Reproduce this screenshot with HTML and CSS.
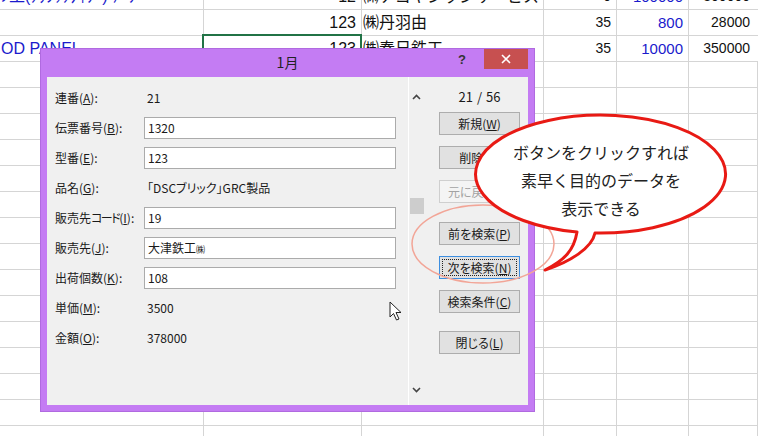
FILE: index.html
```html
<!DOCTYPE html>
<html lang="ja">
<head>
<meta charset="utf-8">
<title>1月</title>
<link rel="stylesheet" href="styles.css">
</head>
<body>
<div class="sheet">
  <div class="row">
    <div class="c blue big left">ﾝ工(ｸﾗｼｯｸﾀｲﾌﾟ) ﾃｰﾌﾟ</div>
    <div class="c num big">12</div>
    <div class="c big left">㈱ナゴヤシッシサービス</div>
    <div class="c num">0</div>
    <div class="c num blue big">100000</div>
    <div class="c num wide">300000</div>
  </div>
  <div class="row">
    <div class="c"></div>
    <div class="c num big">123</div>
    <div class="c big left">㈱丹羽由</div>
    <div class="c num">35</div>
    <div class="c num blue big">800</div>
    <div class="c num wide">28000</div>
  </div>
  <div class="row">
    <div class="c blue big left">OD PANEL</div>
    <div class="c num big sel">123</div>
    <div class="c big left">㈱春日鉄工</div>
    <div class="c num">35</div>
    <div class="c num blue big">10000</div>
    <div class="c num wide">350000</div>
  </div>
  <div class="row"><i class="c"></i><i class="c"></i><i class="c"></i><i class="c"></i><i class="c"></i><i class="c"></i></div>
  <div class="row"><i class="c"></i><i class="c"></i><i class="c"></i><i class="c"></i><i class="c"></i><i class="c"></i></div>
  <div class="row"><i class="c"></i><i class="c"></i><i class="c"></i><i class="c"></i><i class="c"></i><i class="c"></i></div>
  <div class="row"><i class="c"></i><i class="c"></i><i class="c"></i><i class="c"></i><i class="c"></i><i class="c"></i></div>
  <div class="row"><i class="c"></i><i class="c"></i><i class="c"></i><i class="c"></i><i class="c"></i><i class="c"></i></div>
  <div class="row"><i class="c"></i><i class="c"></i><i class="c"></i><i class="c"></i><i class="c"></i><i class="c"></i></div>
  <div class="row"><i class="c"></i><i class="c"></i><i class="c"></i><i class="c"></i><i class="c"></i><i class="c"></i></div>
  <div class="row"><i class="c"></i><i class="c"></i><i class="c"></i><i class="c"></i><i class="c"></i><i class="c"></i></div>
  <div class="row"><i class="c"></i><i class="c"></i><i class="c"></i><i class="c"></i><i class="c"></i><i class="c"></i></div>
  <div class="row"><i class="c"></i><i class="c"></i><i class="c"></i><i class="c"></i><i class="c"></i><i class="c"></i></div>
  <div class="row"><i class="c"></i><i class="c"></i><i class="c"></i><i class="c"></i><i class="c"></i><i class="c"></i></div>
  <div class="row"><i class="c"></i><i class="c"></i><i class="c"></i><i class="c"></i><i class="c"></i><i class="c"></i></div>
  <div class="row"><i class="c"></i><i class="c"></i><i class="c"></i><i class="c"></i><i class="c"></i><i class="c"></i></div>
  <div class="row"><i class="c"></i><i class="c"></i><i class="c"></i><i class="c"></i><i class="c"></i><i class="c"></i></div>
  <div class="row"><i class="c"></i><i class="c"></i><i class="c"></i><i class="c"></i><i class="c"></i><i class="c"></i></div>
</div>

<div class="dialog">
  <div class="titlebar">
    <div class="title">1月</div>
    <div class="help">?</div>
    <div class="close">
      <svg width="10" height="10" viewBox="0 0 10 10"><path d="M1 1 L9 9 M9 1 L1 9" stroke="#fff" stroke-width="1.6" fill="none"/></svg>
    </div>
  </div>
  <div class="content">
    <div class="form">
      <div class="frow"><span class="lbl">連番(<u>A</u>):</span><span class="val">21</span></div>
      <div class="frow"><span class="lbl">伝票番号(<u>B</u>):</span><span class="box">1320</span></div>
      <div class="frow"><span class="lbl">型番(<u>E</u>):</span><span class="box">123</span></div>
      <div class="frow"><span class="lbl">品名(<u>G</u>):</span><span class="val">「DSCブリック」GRC製品</span></div>
      <div class="frow"><span class="lbl">販売先<span class="narrow">コード</span>(<u>I</u>):</span><span class="box">19</span></div>
      <div class="frow"><span class="lbl">販売先(<u>J</u>):</span><span class="box">大津鉄工<span class="kabu">㈱</span></span></div>
      <div class="frow"><span class="lbl">出荷個数(<u>K</u>):</span><span class="box">108</span></div>
      <div class="frow"><span class="lbl">単価(<u>M</u>):</span><span class="val">3500</span></div>
      <div class="frow"><span class="lbl">金額(<u>O</u>):</span><span class="val">378000</span></div>
    </div>
    <div class="vscroll">
      <svg class="arr up" width="9" height="6" viewBox="0 0 9 6"><path d="M1 5 L4.5 1.5 L8 5" stroke="#444" stroke-width="1.6" fill="none"/></svg>
      <div class="thumb"></div>
      <div class="spacer"></div>
      <svg class="arr down" width="9" height="6" viewBox="0 0 9 6"><path d="M1 1 L4.5 4.5 L8 1" stroke="#444" stroke-width="1.6" fill="none"/></svg>
    </div>
    <div class="side">
      <div class="counter">21 / 56</div>
      <div class="btn b1">新規(<u>W</u>)</div>
      <div class="btn b2">削除(<u>D</u>)</div>
      <div class="btn b2 disabled">元に戻す(<u>U</u>)</div>
      <div class="btn b3">前を検索(<u>P</u>)</div>
      <div class="btn b2 focus"><span class="dots">次を検索(<u>N</u>)</span></div>
      <div class="btn b2">検索条件(<u>C</u>)</div>
      <div class="btn b3">閉じる(<u>L</u>)</div>
    </div>
  </div>
</div>

<svg class="ring" width="146" height="82" viewBox="0 0 146 82"><ellipse cx="73" cy="41" rx="71" ry="39" fill="none" stroke="#f2a597" stroke-width="1.5"/></svg>

<svg class="cursor" width="14" height="21" viewBox="0 0 14 21"><path d="M1 1 L1 16 L4.5 12.5 L7.5 19 L10 18 L7 11.5 L12 11.5 Z" fill="#fff" stroke="#222" stroke-width="1" stroke-linejoin="miter"/></svg>

<div class="callout">
  <svg class="bubble" width="270" height="170" viewBox="0 0 270 170">
    <path d="M107 122 A125 59 0 1 1 125 123 C122 138 100 152 75 160 C95 150 104 140 107 122 Z" fill="#fff" stroke="#e81a14" stroke-width="3" stroke-linejoin="round"/>
  </svg>
  <div class="ctext">ボタンをクリックすれば<br>素早く目的のデータを<br>表示できる</div>
</div>
</body>
</html>
```
FILE: styles.css
```css
html, body {
  margin: 0;
  padding: 0;
  width: 758px;
  height: 436px;
  overflow: hidden;
  background: #fff;
}

body {
  position: relative;
  font-family: "Liberation Sans", "Noto Sans CJK JP", sans-serif;
}

.sheet {
  margin-top: -16px;
}

.row {
  display: grid;
  grid-template-columns: 204px 158px 182px 73px 72px 69px;
  height: 26px;
}

.c {
  box-sizing: border-box;
  border-right: 1px solid #d5d5d5;
  border-bottom: 1px solid #d5d5d5;
  height: 26px;
  line-height: 25px;
  font-size: 14px;
  color: #111;
  white-space: nowrap;
  overflow: hidden;
  padding: 0 5px;
  font-style: normal;
}

.c.left { padding-left: 1px; }
.c.num { text-align: right; }
.c.wide { padding-right: 8px; border-right: none; }
.c.big { font-size: 16px; }
.c.blue { color: #1a1acc; }
.c.num.blue { font-size: 15px; }
.c.sel { position: relative; overflow: visible; }
.c.sel::after {
  content: "";
  position: absolute;
  left: -2px;
  top: -2px;
  right: -1px;
  bottom: -1px;
  border: 2px solid #217346;
}

/* dialog */
.dialog {
  position: absolute;
  left: 40px;
  top: 48px;
  width: 495px;
  height: 364px;
  box-sizing: border-box;
  background: #c47cf3;
  padding: 0 7px 7px 7px;
  display: flex;
  flex-direction: column;
  font-family: "Noto Sans CJK JP", "Liberation Sans", sans-serif;
  font-feature-settings: "palt";
  box-shadow: 0 0 0 1px #b06ae0 inset;
}

.titlebar {
  height: 29px;
  display: flex;
  align-items: flex-start;
}

.title {
  flex: 1;
  padding-left: 70px;
  text-align: center;
  font-size: 14px;
  line-height: 29px;
  color: #222;
}

.help {
  width: 26px;
  font-size: 13px;
  font-weight: bold;
  line-height: 22px;
  padding-top: 1px;
  color: #333;
  font-family: "Liberation Sans", sans-serif;
}

.close {
  width: 44px;
  height: 20px;
  margin-top: 1px;
  background: #c75050;
  display: flex;
  align-items: center;
  justify-content: center;
}

.content {
  flex: 1;
  background: #f0f0f0;
  display: flex;
}

.form {
  width: 361px;
  box-sizing: border-box;
  padding: 6px 0 0 8px;
}

.frow {
  height: 30px;
  display: flex;
  align-items: center;
  font-size: 12px;
  color: #1a1a1a;
}

.lbl {
  width: 89px;
  line-height: 16px;
  white-space: nowrap;
}

.narrow {
  letter-spacing: -1.5px;
}

.val {
  padding-left: 3px;
  line-height: 16px;
}

.box {
  box-sizing: border-box;
  width: 252px;
  height: 22px;
  border: 1px solid #ababab;
  background: #fff;
  padding-left: 3px;
  line-height: 20px;
}

.kabu { font-size: 9px; }

.vscroll {
  width: 16px;
  box-sizing: border-box;
  border-left: 1px solid #fff;
  display: flex;
  flex-direction: column;
  align-items: center;
}

.arr { display: block; }
.arr.up { margin-top: 17px; }
.arr.down { margin-bottom: 12px; }

.thumb {
  width: 14px;
  height: 16px;
  background: #cdcdcd;
  margin-top: 98px;
}

.spacer { flex: 1; }

.side {
  flex: 1;
  padding-left: 15px;
  display: flex;
  flex-direction: column;
  align-items: flex-start;
}

.counter {
  width: 81px;
  text-align: center;
  font-size: 13px;
  line-height: 16px;
  margin-top: 12px;
  color: #1a1a1a;
  word-spacing: 1px;
}

.btn {
  box-sizing: border-box;
  width: 81px;
  height: 23px;
  border: 1px solid #adadad;
  background: #e1e1e1;
  font-size: 12px;
  line-height: 21px;
  text-align: center;
  color: #1a1a1a;
}

.btn.b1 { margin-top: 7px; }
.btn.b2 { margin-top: 11px; }
.btn.b3 { margin-top: 19px; }
.btn.b3:last-child { margin-top: 18px; }

.btn.disabled {
  color: #a3a3a3;
  border-color: #cfcfcf;
  background: #f4f4f4;
}

.btn.focus {
  border-color: #3d8ee0;
  padding: 2px;
  line-height: 17px;
}

.dots {
  display: block;
  border: 1px dotted #222;
  height: 17px;
  box-sizing: border-box;
  line-height: 15px;
}

.ring {
  position: absolute;
  left: 410px;
  top: 203px;
}

.cursor {
  position: absolute;
  left: 389px;
  top: 301px;
}

.callout {
  position: absolute;
  left: 470px;
  top: 110px;
  width: 270px;
  height: 170px;
}

.bubble {
  display: block;
}

.ctext {
  position: absolute;
  left: 6px;
  top: 28px;
  width: 250px;
  text-align: center;
  font-family: "Noto Sans CJK JP", sans-serif;
  font-size: 16px;
  line-height: 28px;
  color: #222;
}
```
